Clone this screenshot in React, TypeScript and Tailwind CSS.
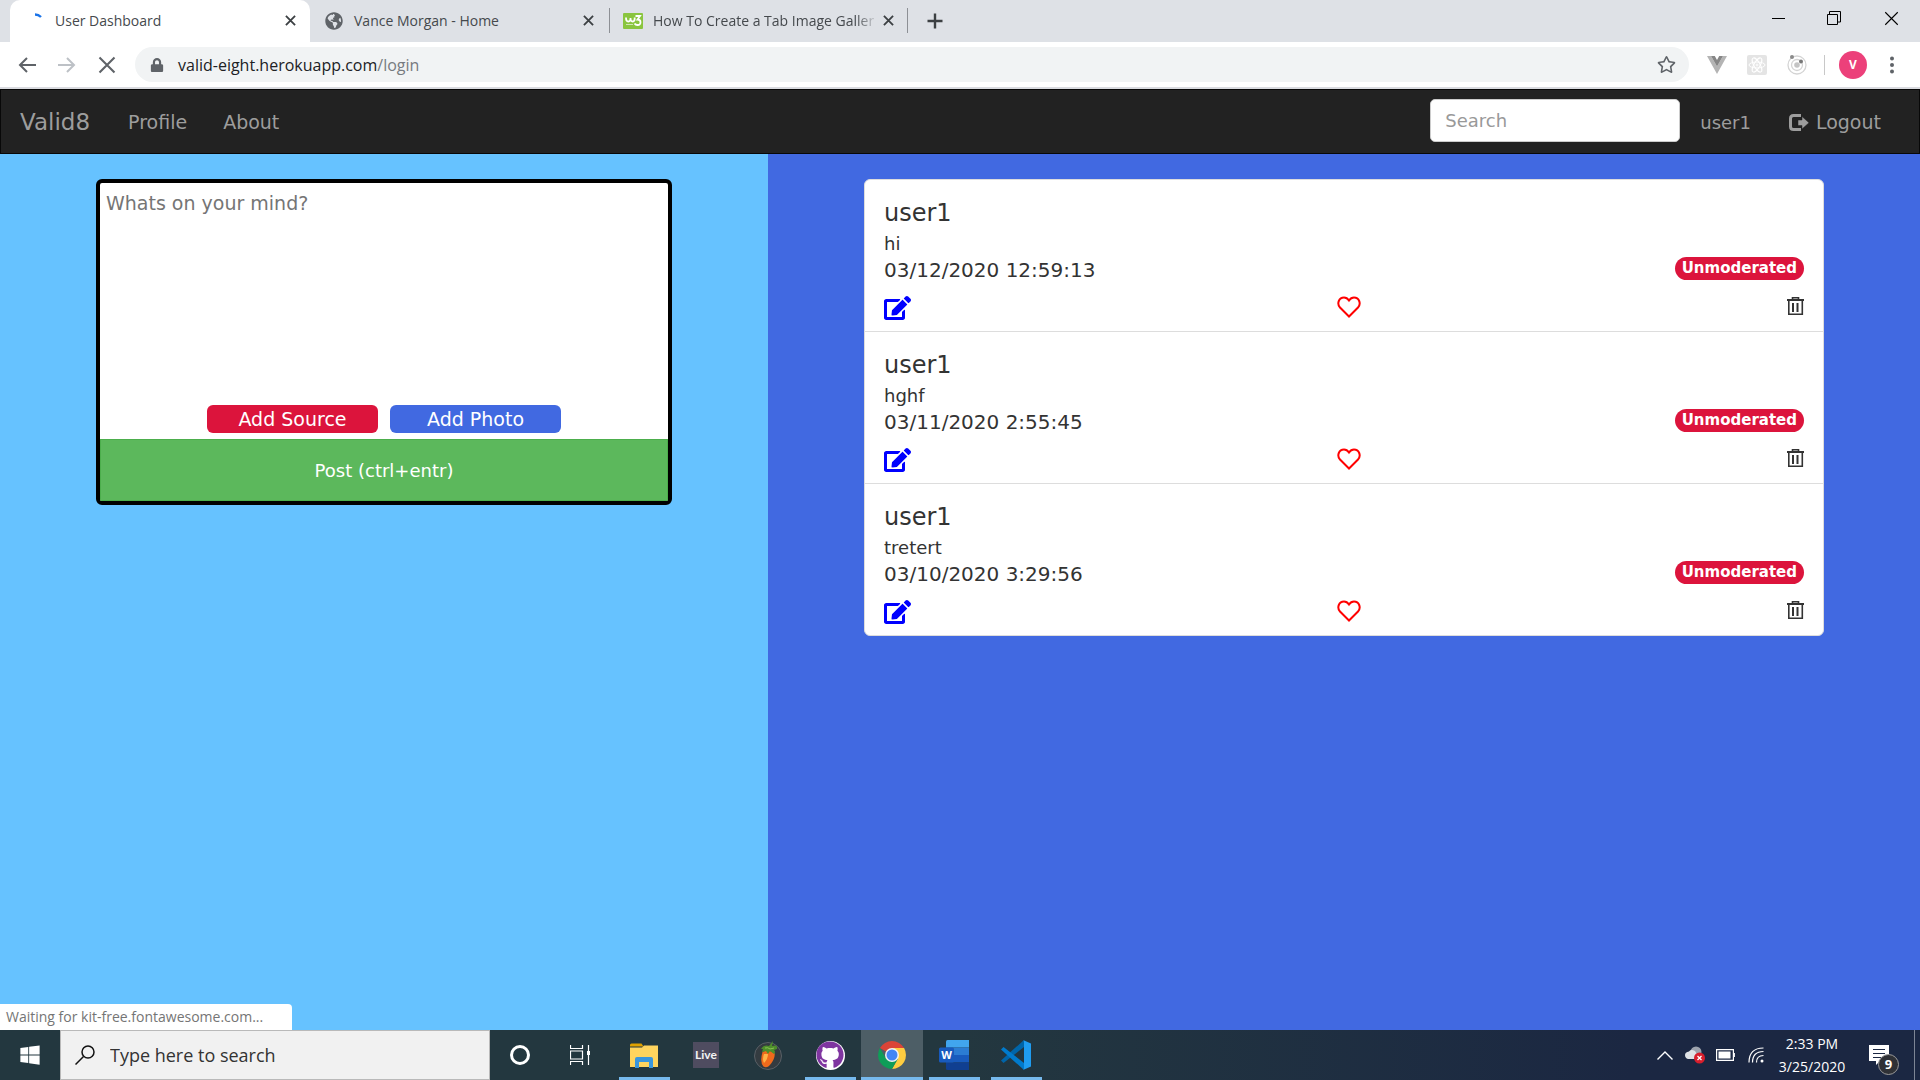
import { ReactNode } from "react";
import { FaEdit, FaGlobeAmericas, FaGithub, FaLock, FaRegStar, FaWindows } from "react-icons/fa";

const posts = [
  { user: "user1", text: "hi", time: "03/12/2020 12:59:13" },
  { user: "user1", text: "hghf", time: "03/11/2020 2:55:45" },
  { user: "user1", text: "tretert", time: "03/10/2020 3:29:56" },
];

function Cross({ className }: { className: string }) {
  return (
    <svg viewBox="0 0 12 12" className={className} fill="none" stroke="currentColor" aria-hidden="true">
      <path d="M1 1l10 10M11 1L1 11" />
    </svg>
  );
}

function TabClose({ title }: { title: string }) {
  return (
    <button aria-label={`Close ${title}`} className="flex size-5 shrink-0 items-center justify-center text-[#3c4043]">
      <Cross className="size-[11px] stroke-2" />
    </button>
  );
}

function TabStrip() {
  return (
    <div className="flex h-[42px] bg-[#dee1e6] text-[14px] text-[#45494d]">
      <div className="ml-[10px] flex w-[300px] items-center rounded-t-[10px] bg-white pr-[10px] pb-px pl-[17px]">
        <svg viewBox="0 0 20 20" className="mr-2 size-5" fill="none" stroke="#1a73e8" strokeWidth="2.4" aria-hidden="true">
          <path d="M8 3.5q3.500 0 6 2.500" />
        </svg>
        <span className="grow">User Dashboard</span>
        <TabClose title="User Dashboard" />
      </div>
      <div className="flex w-[299px] items-center pr-[11px] pb-px pl-[15px]">
        <FaGlobeAmericas className="mr-[11px] size-[18px] text-[#5f6368]" />
        <span className="grow">Vance Morgan - Home</span>
        <TabClose title="Vance Morgan - Home" />
      </div>
      <div className="mt-2 mb-[9px] flex w-[299px] items-center border-x border-[#8d9095] pr-[9px] pl-[13px]">
        <svg viewBox="0 0 20 16" className="mr-[10px] h-4 w-5 shrink-0" fill="none" stroke="#fff" strokeWidth="1.8" aria-hidden="true">
          <rect width="20" height="16" rx="1" fill="#8ac53f" stroke="none" />
          <path d="M3 4.500q0 4 2.300 4t2.200-3.500q0 3.500 2.200 3.500t2-4M12.500 3h4.500l-2.500 3.500q3 0 3 2.800t-3 2.700q-2 0-3-1.500" />
          <path d="M3 11.500h7" strokeWidth="1" strokeOpacity=".6" />
        </svg>
        <span className="grow mask-r-from-90% whitespace-nowrap">How To Create a Tab Image Galler</span>
        <TabClose title="How To Create a Tab Image Gallery" />
      </div>
      <button aria-label="New tab" className="ml-[15px] flex w-6 items-center justify-center text-[#3c4043]">
        <svg viewBox="0 0 16 16" className="size-4" stroke="currentColor" strokeWidth="2.400" aria-hidden="true">
          <path d="M8 .5v15M.5 8h15" />
        </svg>
      </button>
      <div className="ml-auto flex h-9 text-black">
        <button aria-label="Minimize" className="flex w-14 items-center justify-center">
          <span className="h-px w-[13px] bg-black" />
        </button>
        <button aria-label="Restore" className="flex w-14 items-center justify-center">
          <svg viewBox="0 0 14 14" className="size-[14px]" fill="none" stroke="currentColor" aria-hidden="true">
            <path d="M.5 3.500h10v10h-10zM2.500 3V.5h11v10.500H11" />
          </svg>
        </button>
        <button aria-label="Close window" className="flex w-[58px] items-center justify-center">
          <Cross className="size-[15px] stroke-[0.9px]" />
        </button>
      </div>
    </div>
  );
}

function ToolButton({ label, className, children }: { label: string; className: string; children: ReactNode }) {
  return (
    <button aria-label={label} className={`flex h-9 w-10 items-center justify-center ${className}`}>
      {children}
    </button>
  );
}

function Toolbar() {
  return (
    <div className="flex h-[47px] items-center border-b-2 border-[#dadbe0] bg-white">
      <ToolButton label="Back" className="ml-[7px] text-[#5f6368]">
        <svg viewBox="0 0 18 16" className="h-4 w-[18px]" fill="none" stroke="currentColor" strokeWidth="2" aria-hidden="true">
          <path d="M18 8H2M9 1L2 8l7 7" />
        </svg>
      </ToolButton>
      <ToolButton label="Forward" className="text-[#bdc1c6]">
        <svg viewBox="0 0 18 16" className="h-4 w-[18px]" fill="none" stroke="currentColor" strokeWidth="2" aria-hidden="true">
          <path d="M0 8h16M9 1l7 7-7 7" />
        </svg>
      </ToolButton>
      <ToolButton label="Stop" className="text-[#5f6368]">
        <Cross className="size-[18px] stroke-[1.4px]" />
      </ToolButton>
      <div className="ml-2 flex h-[35px] grow items-center rounded-full bg-[#f1f3f4] pr-[13px] pl-[15px]">
        <FaLock className="mr-[14px] size-[14px] text-[#5f6368]" />
        <div className="grow text-[16px] text-[#777b80]">
          <span className="text-[#202124]">valid-eight.herokuapp.com</span>/login
        </div>
        <button aria-label="Bookmark this page" className="text-[#5f6368]">
          <FaRegStar className="size-[19px]" />
        </button>
      </div>
      <div className="flex items-center pl-[18px]">
        <svg viewBox="0 0 20 18" className="h-[18px] w-5" aria-hidden="true">
          <path d="M0 0h4l6 10.500L16 0h4L10 18z" fill="#b4b4b4" />
          <path d="M4 0h3.800L10 4l2.200-4H16l-6 10.500z" fill="#868686" />
        </svg>
        <svg viewBox="0 0 20 20" className="ml-5 size-5" fill="none" stroke="#fff" aria-hidden="true">
          <rect width="20" height="20" rx="2" fill="#e4e4e4" stroke="none" />
          <ellipse cx="10" cy="10" rx="8" ry="3" />
          <ellipse cx="10" cy="10" rx="8" ry="3" transform="rotate(60 10 10)" />
          <ellipse cx="10" cy="10" rx="8" ry="3" transform="rotate(120 10 10)" />
          <circle cx="10" cy="10" r="1" />
        </svg>
        <svg viewBox="0 0 20 20" className="ml-5 size-5" fill="none" stroke="#d4d4d4" aria-hidden="true">
          <circle cx="10" cy="10" r="9" strokeWidth="1.300" />
          <circle cx="10" cy="10" r="5.500" strokeWidth="1.300" />
          <circle cx="10" cy="10" r="2.800" fill="#c4c4c4" stroke="none" />
          <circle cx="5" cy="2" r="2" fill="#8a8a8a" stroke="none" />
          <circle cx="14" cy="6.500" r="2" fill="#777" stroke="none" />
        </svg>
        <span className="ml-[17px] h-5 w-px bg-[#c8c8c8]" />
        <button aria-label="Profile" className="ml-[14px] size-7 rounded-full bg-[#ec407a] text-[12px] font-bold text-white">
          V
        </button>
        <button aria-label="Menu" className="mr-[18px] ml-[15px] flex h-8 w-5 items-center justify-center text-[#5f6368]">
          <svg viewBox="0 0 4 18" className="h-[18px] w-1" fill="currentColor" aria-hidden="true">
            <circle cx="2" cy="2.500" r="2" />
            <circle cx="2" cy="9" r="2" />
            <circle cx="2" cy="15.500" r="2" />
          </svg>
        </button>
      </div>
    </div>
  );
}

function Navbar() {
  return (
    <nav className="flex h-[65px] items-center border border-[#080808] bg-[#222] px-[19px] pt-[2px] text-[19px] text-[#9d9d9d]">
      <a href="#home" className="text-[23px]">Valid8</a>
      <a href="#profile" className="ml-[38px]">Profile</a>
      <a href="#about" className="ml-9">About</a>
      <input
        aria-label="Search"
        placeholder="Search"
        className="mr-5 mb-1 ml-auto h-[43px] w-[250px] rounded-[5px] border border-[#ccc] bg-white px-[14px] text-[18px] placeholder:text-[#999]"
      />
      <a href="#user" className="text-[18px]">user1</a>
      <a href="#logout" className="mr-[19px] ml-[38px] flex items-center">
        <svg viewBox="0 0 20 18" className="mr-[7px] h-[18px] w-5" aria-hidden="true">
          <path d="M12 1.500H4.500q-3 0-3 3v8q0 3 3 3H12" fill="none" stroke="currentColor" strokeWidth="3" />
          <path d="M9 6h4V2.500L20 8.800 13 15v-3.500H9z" fill="currentColor" stroke="#222" strokeWidth=".5" />
        </svg>
        Logout
      </a>
    </nav>
  );
}

function Composer() {
  return (
    <section className="w-[40%] bg-[#66c2ff] px-24 pt-[25px]">
      <form className="flex flex-col overflow-hidden rounded-[6px] border-4 border-black bg-white">
        <textarea
          aria-label="Whats on your mind?"
          placeholder="Whats on your mind?"
          className="h-[222px] resize-none px-[6px] py-[7px] text-[19px] leading-[26px] placeholder:text-[#757575]"
        />
        <div className="mb-[6px] flex justify-center gap-3 text-[19px] leading-7 text-white">
          <button type="button" className="w-[171px] rounded-[6px] bg-[#dc143c]">Add Source</button>
          <button type="button" className="w-[171px] rounded-[6px] bg-[#4169e1]">Add Photo</button>
        </div>
        <button type="button" className="h-[62px] border border-[#4cae4c] bg-[#5cb85c] text-[18px] text-white">
          Post (ctrl+entr)
        </button>
      </form>
    </section>
  );
}

function Feed() {
  return (
    <section className="w-[60%] bg-[#4169e1] px-24 pt-[25px]">
      <ul className="divide-y divide-[#ddd] rounded-[6px] border border-[#ddd] bg-white text-[#333]">
        {posts.map((post) => (
          <li key={post.time} className="px-[19px] pt-[17px] pb-[9px]">
            <h4 className="mb-[2px] text-[24px] leading-8">{post.user}</h4>
            <p className="text-[18px] leading-[26px]">{post.text}</p>
            <div className="flex items-start justify-between">
              <p className="text-[20px] leading-[26px]">{post.time}</p>
              <span className="rounded-full bg-[#dc143c] px-[7px] text-[15px] leading-[23px] font-bold text-white">Unmoderated</span>
            </div>
            <div className="mt-[13px] flex h-[26px] items-start justify-between">
              <button aria-label="Edit" className="text-[#00f]">
                <FaEdit className="h-6 w-[27px]" />
              </button>
              <button aria-label="Like" className="text-[#f00]">
                <svg viewBox="0 0 24 22" className="h-[22px] w-6" fill="none" stroke="currentColor" strokeWidth="2" aria-hidden="true">
                  <path d="M12 20.500L3 11.500C-.5 7.500 2 1.500 7 1.500q3 0 5 3 2-3 5-3c5 0 7.500 6 4 10z" />
                </svg>
              </button>
              <button aria-label="Delete">
                <svg viewBox="0 0 17 20" className="h-5 w-[17px]" fill="none" stroke="currentColor" aria-hidden="true">
                  <path d="M0 4h17" strokeWidth="2" />
                  <path d="M5.500 3V1.700h6V3M1.800 4v14.300h13.500V4" strokeWidth="1.600" />
                  <path d="M6 7v9M10.500 7v9" strokeWidth="2" />
                </svg>
              </button>
            </div>
          </li>
        ))}
      </ul>
    </section>
  );
}

function ExplorerIcon() {
  return (
    <svg viewBox="0 0 28 28" className="size-7" aria-hidden="true">
      <path d="M0 4q0-1.500 1.500-1.500h10l2 3H0z" fill="#e0a100" />
      <path d="M0 6.500h12l2-2h14V26H0z" fill="#ffd45e" />
      <path d="M5 27V18q0-2 2-2h14q2 0 2 2v9h-4v-6H9v6z" fill="#3a96dd" />
    </svg>
  );
}

function LiveIcon() {
  return <span className="flex size-[26px] items-center justify-center bg-[#4f4c60] font-[Lato,sans-serif] text-[12px] font-bold text-[#f3f3f3]">Live</span>;
}

function FruitIcon() {
  return (
    <svg viewBox="0 0 30 30" className="size-[30px]" aria-hidden="true">
      <circle cx="15" cy="16" r="13.500" fill="#343b40" stroke="#596066" />
      <path d="M9.500 12q5-3 12 1 1 4-3 10-4 6-8 3.500-4-4-1-14.500z" fill="#f06a1c" />
      <path d="M11 14q-2 5 0 9 4-4 4-9z" fill="#ffb347" />
      <path d="M8 9q3-5 8-3l4-5-1 5q6-2 5 3l-3 1q2 2 0 4l-4-3-2 3-2-3-4 1 1-3z" fill="#4d8f2b" />
      <path d="M12 8q3-1 5 1l4-1" fill="none" stroke="#8cc152" />
    </svg>
  );
}

function GithubIcon() {
  return (
    <span className="flex size-[29px] items-center justify-center rounded-full bg-white">
      <FaGithub className="size-[28px] text-[#7f35a0]" />
    </span>
  );
}

function ChromeIcon() {
  return (
    <svg viewBox="0 0 28 28" className="size-7" aria-hidden="true">
      <path d="M14 14L1.900 7A14 14 0 0 1 26.100 7z" fill="#db4437" />
      <path d="M14 7H26.100A14 14 0 0 1 14 28l6-10.500z" fill="#ffcd40" />
      <path d="M8 17.500L1.900 7A14 14 0 0 0 14 28l6-10.500z" fill="#0f9d58" />
      <circle cx="14" cy="14" r="7" fill="#f1f1f1" />
      <circle cx="14" cy="14" r="5.500" fill="#4285f4" />
    </svg>
  );
}

function WordIcon() {
  return (
    <svg viewBox="0 0 30 30" className="size-[30px]" aria-hidden="true">
      <path d="M7 1.500q0-1.500 1.500-1.500H30v7.500H7z" fill="#41a5ee" />
      <path d="M7 7.500h23V15H7z" fill="#2b7cd3" />
      <path d="M7 15h23v7.500H7z" fill="#185abd" />
      <path d="M7 22.500h23V30H8.500Q7 30 7 28.500z" fill="#103f91" />
      <rect y="7.500" width="15" height="15" rx="1.500" fill="#185abd" />
      <text x="7.500" y="19" textAnchor="middle" fill="#fff" fontSize="11" fontWeight="700">W</text>
    </svg>
  );
}

function CodeIcon() {
  return (
    <svg viewBox="0 0 30 30" className="size-[30px]" aria-hidden="true">
      <path d="M0 20.500l2.500 2.500L23 7V0z" fill="#0065a9" />
      <path d="M0 9.500L2.500 7 23 23v7z" fill="#007acc" />
      <path d="M22 0l8 3.500v23L22 30q1 0 1-2V2q0-2-1-2z" fill="#1f9cf0" />
    </svg>
  );
}

const apps = [
  { name: "File Explorer", icon: <ExplorerIcon />, running: true, active: false },
  { name: "Ableton Live", icon: <LiveIcon />, running: false, active: false },
  { name: "FL Studio", icon: <FruitIcon />, running: false, active: false },
  { name: "GitHub Desktop", icon: <GithubIcon />, running: true, active: false },
  { name: "Google Chrome", icon: <ChromeIcon />, running: true, active: true },
  { name: "Word", icon: <WordIcon />, running: true, active: false },
  { name: "Visual Studio Code", icon: <CodeIcon />, running: true, active: false },
];

function Taskbar() {
  return (
    <footer className="flex h-[50px] bg-linear-to-r from-[#23373f] from-50% to-[#1b2742] to-85% text-white">
      <button aria-label="Start" className="flex w-[60px] items-center justify-center">
        <FaWindows className="size-[22px]" />
      </button>
      <label className="flex w-[430px] items-center border border-[#b9b9b9] bg-[#f1f1f1] pl-[14px] text-[#333]">
        <svg viewBox="0 0 20 20" className="mr-[15px] size-5 shrink-0" fill="none" stroke="#111" strokeWidth="1.500" aria-hidden="true">
          <circle cx="13" cy="7" r="6" />
          <path d="M8.500 11.500L.5 19.500" />
        </svg>
        <input aria-label="Type here to search" placeholder="Type here to search" className="grow text-[18px] outline-none placeholder:text-[#333]" />
      </label>
      <button aria-label="Cortana" className="flex w-[60px] items-center justify-center">
        <span className="size-5 rounded-full border-[3px] border-white" />
      </button>
      <button aria-label="Task view" className="mr-[3px] flex w-[60px] items-center justify-center">
        <svg viewBox="0 0 20 20" className="size-5" fill="none" stroke="#fff" aria-hidden="true">
          <path d="M.5 0v3.500h12V0M.5 20v-3.500h12V20M.5 6h12v8H.5zM18.500 0v20" strokeWidth="1.200" />
          <path d="M18.500 6v4" strokeWidth="3" />
        </svg>
      </button>
      {apps.map((app) => (
        <button
          key={app.name}
          aria-label={app.name}
          className={`flex w-[62px] flex-col items-center ${app.active ? "bg-[#4d5e66]" : ""}`}
        >
          <span className="flex grow items-center pt-[3px]">{app.icon}</span>
          <span className={`h-[3px] ${app.active ? "w-full" : "w-[51px]"} ${app.running ? "bg-[#76b9ed]" : ""}`} />
        </button>
      ))}
      <div className="ml-auto flex items-center">
        <svg viewBox="0 0 16 9" className="h-[9px] w-4" fill="none" stroke="#fff" strokeWidth="1.400" aria-hidden="true">
          <path d="M.5 8.500L8 1l7.500 7.500" />
        </svg>
        <svg viewBox="0 0 20 18" className="ml-3 h-[18px] w-5" aria-hidden="true">
          <circle cx="11" cy="6" r="5.500" fill="#9da3ad" />
          <path d="M3 13q-3-1-3-4t4-3.500Q6 3 10 5l5 8z" fill="#dfe2e6" />
          <circle cx="14.500" cy="12" r="5.500" fill="#d81e2c" />
          <path d="M12.500 10l4 4m0-4l-4 4" stroke="#fff" strokeWidth="1.300" />
        </svg>
        <svg viewBox="0 0 19 12" className="ml-[11px] h-3 w-[19px]" fill="none" stroke="#fff" aria-hidden="true">
          <path d="M.6.6h16.800v10.800H.6zM18.300 4v4" strokeWidth="1.200" />
          <path d="M2.500 2.500h12v7h-12z" fill="#fff" stroke="none" />
        </svg>
        <svg viewBox="0 0 16 16" className="ml-[13px] size-4" fill="none" stroke="#fff" strokeWidth="1.200" aria-hidden="true">
          <path d="M1 15.500Q1 1 15.500 1M4.500 15.500q0-11 11-11M8.500 15.500q0-7 7-7" />
          <circle cx="14" cy="14" r="1.500" fill="#fff" stroke="none" />
        </svg>
        <div className="ml-3 w-[72px] text-center text-[14px] leading-[23px] whitespace-nowrap">
          <div>2:33 PM</div>
          <div>3/25/2020</div>
        </div>
        <button aria-label="9 notifications" className="relative mr-[25px] ml-[21px]">
          <svg viewBox="0 0 20 20" className="size-5" aria-hidden="true">
            <path d="M0 0h20v16H11l-4 4v-4H0z" fill="#fff" />
            <path d="M4 4.500h12M4 8.500h12M4 12.500h8" stroke="#1b2742" strokeWidth="1.200" />
          </svg>
          <span className="absolute top-[9px] left-[9px] flex size-[21px] items-center justify-center rounded-full border border-[#9a9a9a] bg-[#2f3136] text-[13px] font-bold">9</span>
        </button>
        <span className="mr-[5px] h-[50px] w-px bg-[#7d8594]" />
      </div>
    </footer>
  );
}

export default function App() {
  return (
    <div className="flex min-h-screen flex-col font-['Open_Sans',sans-serif]">
      <TabStrip />
      <Toolbar />
      <div className="relative flex grow flex-col font-['DejaVu_Sans',sans-serif]">
        <Navbar />
        <main className="flex grow">
          <Composer />
          <Feed />
        </main>
        <div
          role="status"
          className="absolute bottom-0 left-0 w-[292px] rounded-tr-[4px] bg-white pl-[6px] font-['Open_Sans',sans-serif] text-[14px] leading-[26px] text-[#757575]"
        >
          Waiting for kit-free.fontawesome.com...
        </div>
      </div>
      <Taskbar />
    </div>
  );
}
